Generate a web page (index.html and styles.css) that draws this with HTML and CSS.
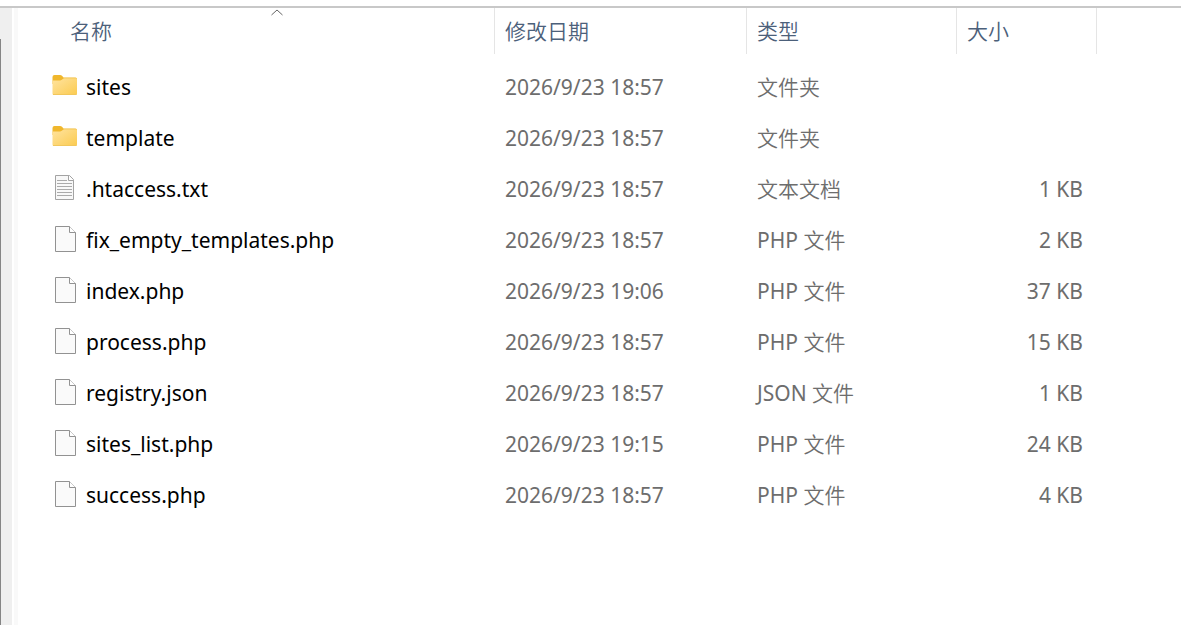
FILE: index.html
```html
<!DOCTYPE html>
<html lang="zh-CN">
<head>
<meta charset="utf-8">
<title>文件列表</title>
<link rel="stylesheet" href="styles.css">
</head>
<body>
<svg width="0" height="0" class="defs" aria-hidden="true">
  <defs>
    <linearGradient id="fold" x1="0" y1="0" x2="1" y2="1">
      <stop offset="0" stop-color="#ffe39f"/>
      <stop offset="1" stop-color="#fbcb50"/>
    </linearGradient>
    <symbol id="folder" viewBox="0 0 26 26">
      <path d="M.5 4Q.5 2 2.500 2H8Q9.200 2 10 2.800L11.500 4.500H23.500Q25 4.500 25 6V11H.5Z" fill="#f0b72c"/>
      <path d="M.5 7.500H8Q9 7.500 9.800 6.800L10.800 6Q11.500 5.300 12.300 5.300H24Q25 5.300 25 6.300V20.500Q25 22 23.500 22H2Q.5 22 .5 20.500Z" fill="url(#fold)"/>
      <path d="M1 21.500H24.500" stroke="#f2c75c"/>
    </symbol>
    <symbol id="page" viewBox="0 0 26 26">
      <path d="M3.500 .5H17.500L23.500 6.500V25.500H3.500Z" fill="#fafafa" stroke="#929292"/>
      <path d="M17.500 .5V6.500H23.500" fill="#fff" stroke="#929292"/>
    </symbol>
    <symbol id="text" viewBox="0 0 26 26">
      <path d="M3.500 .5H17.500L21.500 4.500V24.500H3.500Z" fill="#f8f8f8" stroke="#a3a3a3"/>
      <path d="M16.500 .5V5.500H21.500" fill="#fff" stroke="#a3a3a3"/>
      <path d="M5 5.500H15M5 8.500H20M5 11.500H20M5 14.500H20M5 17.500H20M5 20.500H20" fill="none" stroke="#aaa"/>
    </symbol>
  </defs>
</svg>
<div class="window">
  <div class="rail"><div class="thumb"></div></div>
  <div class="divider"></div>
  <main class="pane">
    <table class="files">
      <colgroup><col class="c-name"><col class="c-date"><col class="c-type"><col class="c-size"><col></colgroup>
      <thead>
        <tr>
          <th class="name-head" aria-sort="ascending"><button type="button">名称<svg class="caret" viewBox="0 0 12 7" aria-hidden="true"><path d="M.5 6L6 1L11.500 6"/></svg></button></th>
          <th><button type="button">修改日期</button></th>
          <th><button type="button">类型</button></th>
          <th><button type="button">大小</button></th>
          <td></td>
        </tr>
      </thead>
      <tbody>
        <tr><td class="name"><svg class="icon"><use href="#folder"/></svg>sites</td><td>2026/9/23 18:57</td><td><span class="zh">文件夹</span></td><td class="size"></td><td></td></tr>
        <tr><td class="name"><svg class="icon"><use href="#folder"/></svg>template</td><td>2026/9/23 18:57</td><td><span class="zh">文件夹</span></td><td class="size"></td><td></td></tr>
        <tr><td class="name"><svg class="icon"><use href="#text"/></svg>.htaccess.txt</td><td>2026/9/23 18:57</td><td><span class="zh">文本文档</span></td><td class="size">1 KB</td><td></td></tr>
        <tr><td class="name"><svg class="icon"><use href="#page"/></svg>fix_empty_templates.php</td><td>2026/9/23 18:57</td><td>PHP <span class="zh">文件</span></td><td class="size">2 KB</td><td></td></tr>
        <tr><td class="name"><svg class="icon"><use href="#page"/></svg>index.php</td><td>2026/9/23 19:06</td><td>PHP <span class="zh">文件</span></td><td class="size">37 KB</td><td></td></tr>
        <tr><td class="name"><svg class="icon"><use href="#page"/></svg>process.php</td><td>2026/9/23 18:57</td><td>PHP <span class="zh">文件</span></td><td class="size">15 KB</td><td></td></tr>
        <tr><td class="name"><svg class="icon"><use href="#page"/></svg>registry.json</td><td>2026/9/23 18:57</td><td>JSON <span class="zh">文件</span></td><td class="size">1 KB</td><td></td></tr>
        <tr><td class="name"><svg class="icon"><use href="#page"/></svg>sites_list.php</td><td>2026/9/23 19:15</td><td>PHP <span class="zh">文件</span></td><td class="size">24 KB</td><td></td></tr>
        <tr><td class="name"><svg class="icon"><use href="#page"/></svg>success.php</td><td>2026/9/23 18:57</td><td>PHP <span class="zh">文件</span></td><td class="size">4 KB</td><td></td></tr>
      </tbody>
    </table>
  </main>
</div>
</body>
</html>
```

FILE: styles.css
```css
* { box-sizing: border-box; }

body {
  margin: 0;
  padding-top: 6px;
  background: #fff;
  font: 21px/30px "Noto Sans", "Noto Sans CJK SC", sans-serif;
  color: #6d6d6d;
}

.defs { position: absolute; }

.window {
  display: flex;
  min-height: calc(100vh - 6px);
  border-top: 2px solid #c8c8c8;
}

.rail {
  display: flex;
  flex: none;
  width: 12px;
  padding-top: 31px;
  background: #efefef;
}

.thumb {
  width: 1px;
  background: #858585;
}

.divider {
  flex: none;
  width: 4px;
  margin: 0 0 0 2px;
  background: #f9f9f9;
}

.pane {
  flex: 1;
  min-width: 0;
}

.files {
  width: 100%;
  table-layout: fixed;
  border-collapse: separate;
  border-spacing: 0;
}

.c-name { width: 477px; }
.c-date { width: 252px; }
.c-type { width: 210px; }
.c-size { width: 140px; }

th {
  height: 46px;
  padding: 0;
  border-right: 1px solid #e5e5e5;
}

.name-head { padding-left: 42px; }

th button {
  position: relative;
  display: block;
  width: 100%;
  height: 46px;
  padding: 0 10px;
  border: 0;
  background: none;
  font: inherit;
  font-weight: 350;
  color: #4c607a;
  text-align: left;
}

.zh { font-weight: 350; }

.caret {
  position: absolute;
  top: 1px;
  left: 50%;
  width: 12px;
  height: 7px;
  margin-left: -6px;
  fill: none;
  stroke: #666;
}

tbody::before {
  content: "";
  display: table-row;
  height: 7px;
}

tbody td {
  height: 51px;
  padding: 0 10px;
  white-space: nowrap;
}

tbody .name {
  padding-left: 34px;
  color: #000;
}

.icon {
  width: 26px;
  height: 26px;
  margin-right: 8px;
  vertical-align: -4px;
}

tbody .size {
  padding-right: 14px;
  text-align: right;
}
```
